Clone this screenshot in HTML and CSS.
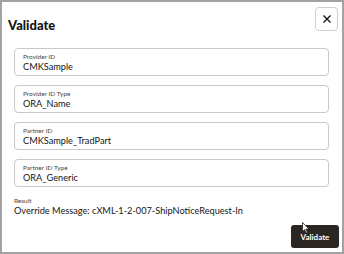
FILE: index.html
```html
<!DOCTYPE html>
<html lang="en">
<head>
    <meta charset="UTF-8">
    <meta name="viewport" content="width=device-width, initial-scale=1.0">
    <title>Validate</title>
    <link rel="stylesheet" href="styles.css">
</head>
<body>
    <div class="dialog">
        <div class="dialog-header">
            <h1>Validate</h1>
            <button class="close-btn" aria-label="Close">
                <svg width="10" height="10" viewBox="0 0 10 10">
                    <path d="M1.5 1.5 L8.5 8.5 M8.5 1.5 L1.5 8.5" stroke="#161513" stroke-width="1.4" fill="none"/>
                </svg>
            </button>
        </div>
        <div class="fields">
            <div class="field">
                <span class="field-label">Provider ID</span>
                <span class="field-value">CMKSample</span>
            </div>
            <div class="field">
                <span class="field-label">Provider ID Type</span>
                <span class="field-value">ORA_Name</span>
            </div>
            <div class="field">
                <span class="field-label">Partner ID</span>
                <span class="field-value">CMKSample_TradPart</span>
            </div>
            <div class="field">
                <span class="field-label">Partner ID Type</span>
                <span class="field-value">ORA_Generic</span>
            </div>
            <div class="result">
                <span class="field-label">Result</span>
                <span class="field-value">Override Message: cXML-1-2-007-ShipNoticeRequest-In</span>
            </div>
        </div>
        <div class="dialog-footer">
            <button class="validate-btn">Validate</button>
            <svg class="cursor" width="8" height="12" viewBox="0 0 8 12">
                <path d="M0.5 0.5 L0.5 9.5 L2.6 7.6 L4 11 L5.4 10.4 L4 7.1 L7 7.1 Z" fill="#fff" stroke="#222" stroke-width="0.8"/>
            </svg>
        </div>
    </div>
</body>
</html>
```

FILE: styles.css
```css
body {
    margin: 0;
    background-color: #a3a3a3;
    font-family: Lato, "Noto Sans", sans-serif;
    color: #161513;
}

.dialog {
    width: 340px;
    height: 250px;
    margin: 2px;
    background-color: #fff;
    display: flex;
    flex-direction: column;
    position: relative;
}

.dialog-header {
    height: 46px;
    box-sizing: border-box;
    padding: 5px 4px 0 6px;
    display: flex;
    justify-content: space-between;
    align-items: flex-start;
}

h1 {
    margin: 10px 0 0 0;
    font-size: 13px;
    line-height: 16px;
    font-weight: 900;
}

.close-btn {
    width: 23px;
    height: 24px;
    padding: 0;
    border: 1px solid #cfcfcf;
    border-radius: 4px;
    background-color: #fff;
    display: flex;
    align-items: center;
    justify-content: center;
}

.fields {
    padding: 0 13px 0 12px;
    display: flex;
    flex-direction: column;
    gap: 9px;
}

.field {
    height: 28px;
    box-sizing: border-box;
    border: 1px solid #c9c9c9;
    border-radius: 4px;
    padding: 4px 8px 0 8px;
    display: flex;
    flex-direction: column;
}

.field-label {
    font-size: 6.5px;
    line-height: 8px;
    color: #4a4541;
}

.field-value {
    font-size: 9.2px;
    line-height: 12px;
}

.result {
    margin-top: 1px;
    display: flex;
    flex-direction: column;
}

.dialog-footer {
    margin-top: auto;
    padding: 0 3px 4px 0;
    display: flex;
    justify-content: flex-end;
    position: relative;
}

.validate-btn {
    width: 48px;
    height: 23px;
    border: none;
    border-radius: 3px;
    background-color: #2c2623;
    color: #fff;
    font-family: Lato, "Noto Sans", sans-serif;
    font-size: 8px;
    font-weight: bold;
    padding: 0;
}

.cursor {
    position: absolute;
    right: 32px;
    top: -3px;
}
```
